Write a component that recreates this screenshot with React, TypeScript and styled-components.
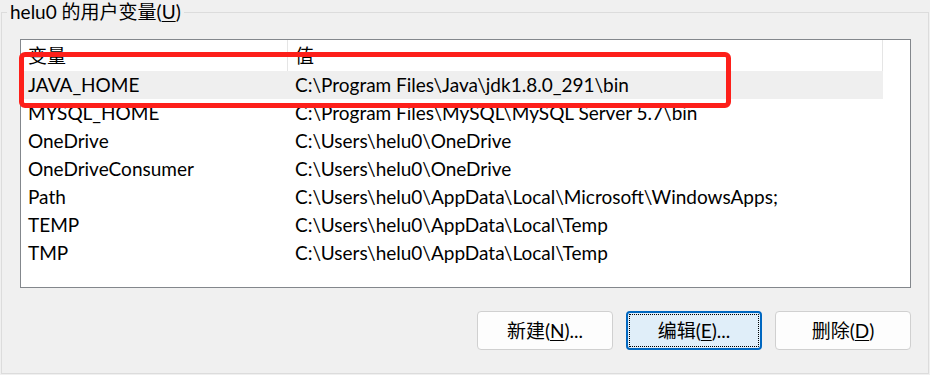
import React from "react";
import styled, { createGlobalStyle } from "styled-components";

const Global = createGlobalStyle`
  html, body { margin: 0; padding: 0; background: #f0f0f0; }
  body { width: 930px; height: 375px; overflow: hidden; font-family: Lato, "Noto Sans CJK SC", sans-serif; color: #000; }
  * { box-sizing: border-box; }
`;

const FONT = `Lato, "Noto Sans CJK SC", sans-serif`;

const Group = styled.fieldset`
  margin: 0 0 0 1px;
  width: 928px;
  height: 374px;
  border: 1px solid #dcdcdc;
  padding: 15px 17px 23px 18px;
  min-width: 0;
  display: flex;
  flex-direction: column;
`;

const Legend = styled.legend`
  margin-left: -13px;
  padding: 0 3px;
  font: 19px/24px ${FONT};
  color: #000;
`;

const U = styled.span`
  text-decoration: underline;
  text-underline-offset: 2px;
  text-decoration-thickness: 1px;
`;

const ListBox = styled.div`
  position: relative;
  width: 891px;
  height: 249px;
  border: 1px solid #83878c;
  background: #fff;
  display: flex;
  flex-direction: column;
`;

const Table = styled.div`
  width: 862px;
  display: flex;
  flex-direction: column;
`;

const Row = styled.div<{ $selected?: boolean }>`
  display: grid;
  grid-template-columns: 267px 595px;
  height: 28px;
  align-items: center;
  background: ${(p) => (p.$selected ? "#efefef" : "transparent")};
  font: 19px/28px ${FONT};
`;

const HeaderRow = styled(Row)`
  height: 31px;
  line-height: 31px;
`;

const HeadCell = styled.div`
  height: 100%;
  padding-left: 7px;
  border-right: 1px solid #e5e5e5;
  white-space: nowrap;
`;

const Cell = styled.div`
  padding-left: 7px;
  white-space: nowrap;
  overflow: hidden;
`;

const Highlight = styled.div`
  position: absolute;
  left: -2px;
  top: 12px;
  width: 712px;
  height: 56px;
  border: 5px solid #fd1f1a;
  border-radius: 6px;
  pointer-events: none;
`;

const Buttons = styled.div`
  margin-top: 23px;
  display: flex;
  justify-content: flex-end;
  gap: 13px;
  width: 891px;
`;

const Button = styled.button<{ $focused?: boolean }>`
  position: relative;
  width: 136px;
  height: 39px;
  border-radius: 4px;
  border: ${(p) => (p.$focused ? "2px solid #0067c0" : "1px solid #d0d0d0")};
  background: ${(p) => (p.$focused ? "#e0eef9" : "#fdfdfd")};
  font: 19px/1 ${FONT};
  color: #000;
  padding: 0;
  display: flex;
  align-items: center;
  justify-content: center;
  ${(p) =>
    p.$focused
      ? `&::after { content: ""; position: absolute; inset: 1px; border: 1px dotted #000; border-radius: 1px; }`
      : ""}
`;

const rows: [string, string][] = [
  ["JAVA_HOME", "C:\\Program Files\\Java\\jdk1.8.0_291\\bin"],
  ["MYSQL_HOME", "C:\\Program Files\\MySQL\\MySQL Server 5.7\\bin"],
  ["OneDrive", "C:\\Users\\helu0\\OneDrive"],
  ["OneDriveConsumer", "C:\\Users\\helu0\\OneDrive"],
  ["Path", "C:\\Users\\helu0\\AppData\\Local\\Microsoft\\WindowsApps;"],
  ["TEMP", "C:\\Users\\helu0\\AppData\\Local\\Temp"],
  ["TMP", "C:\\Users\\helu0\\AppData\\Local\\Temp"],
];

export default function App() {
  return (
    <>
      <Global />
      <Group>
        <Legend>
          helu0 的用户变量(<U>U</U>)
        </Legend>
        <ListBox>
          <Table>
            <HeaderRow>
              <HeadCell>变量</HeadCell>
              <HeadCell>值</HeadCell>
            </HeaderRow>
            {rows.map(([k, v], i) => (
              <Row key={k} $selected={i === 0}>
                <Cell>{k}</Cell>
                <Cell>{v}</Cell>
              </Row>
            ))}
          </Table>
          <Highlight />
        </ListBox>
        <Buttons>
          <Button>
            新建(<U>N</U>)...
          </Button>
          <Button $focused>
            编辑(<U>E</U>)...
          </Button>
          <Button>
            删除(<U>D</U>)
          </Button>
        </Buttons>
      </Group>
    </>
  );
}
